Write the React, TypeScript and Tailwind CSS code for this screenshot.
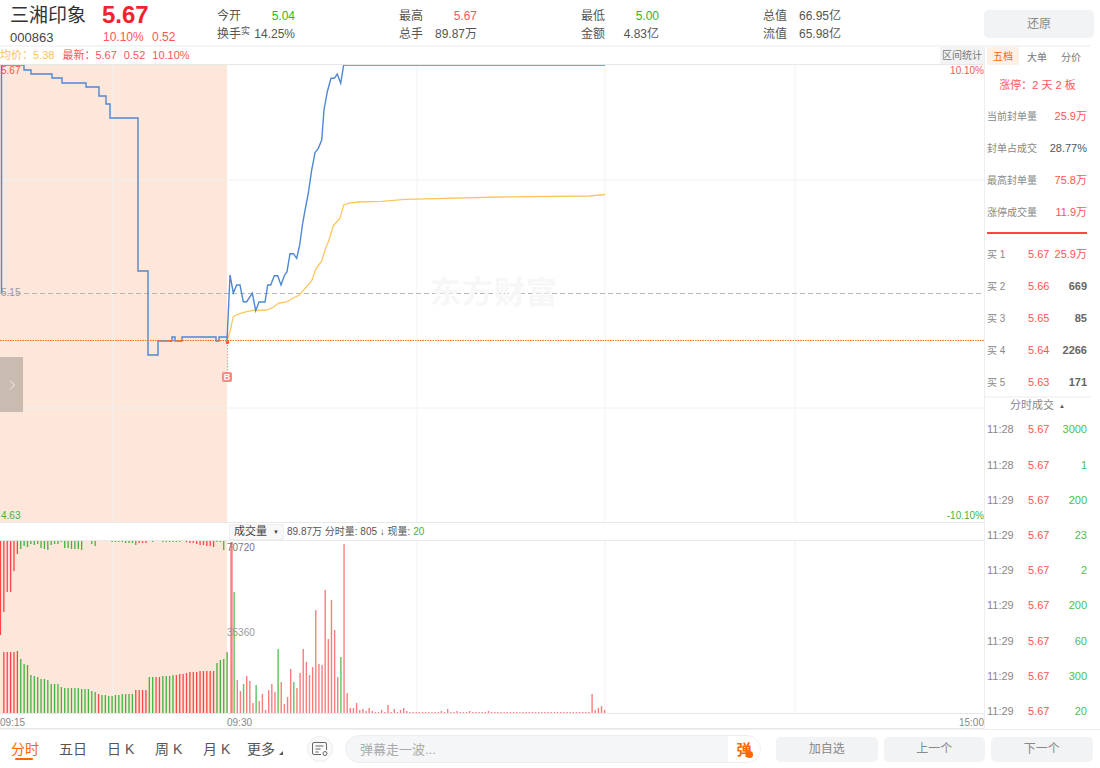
const priceLine =
  '1.5,293 1.5,65 24,65 24,70 31,70 31,74 52,74 52,78 62,78 62,83 86,83 86,87 99,87 99,96 106,96 106,104 110,104 110,118 138,118 138,271 148,271 148,355 158,355 158,341 172,341 172,337 175,337 175,341 182,341 182,337 216,337 216,341 219,341 219,337 227,337 227,341 ' +
  '230,275 233.3,293 236.7,285 240,285 243.3,301.7 246.7,301.7 252.3,293 255.7,310.7 259,302 265,302 267.7,285 270.7,285 274.3,275.7 277.7,275.7 281,285 284.3,275.7 287,271.7 290,253.7 293.3,253.7 296.7,258.3 299.7,245 302.7,223 305.7,206.7 308.3,193.3 311.7,170 315,152.7 318.3,148.3 321.7,140 324,110 327.3,91.7 331,78.3 334.3,78.3 337.3,74 340.7,83.3 343.7,65 605,65'

const avgLine =
  '227.7,339 230,331.7 233.3,316.7 238.3,314 246.7,311.7 253.3,310.3 266.7,310 273.3,307.3 278.3,303.3 286.7,302 293.3,298 299,295.3 305,288.3 311.7,280.7 315.7,269.3 321.7,261 325,250 329,240 333.3,225.7 340,218.3 343.7,205 348.3,203.3 358.3,202 381.7,201.3 405,199.3 500,197 590,196 605,194.5'

// pre-market bars: hanging from the top and rising from the bottom
const preTop = [94, 71, 51, 51, 30, 13, 8, 5, 6, 3, 4, 3, 7, 8, 9, 4, 3, 3, 1, 7, 7, 8, 8, 8, 9, 0, 0, 3, 5, 0, 0, 0, 0, 1, 1, 1, 1, 2, 2, 2, 4, 2, 2, 2, 0, 1, 0, 0, 1, 1, 1, 1, 1, 1, 0, 1, 2, 2, 3, 4, 4, 5, 5, 6, 1, 1, 9]
const preTopRed = (i: number) => i < 6 || (i >= 41 && i <= 43) || (i >= 54 && i <= 63)
const preBottom = [0, 61, 61, 61, 61, 62, 54, 49, 48, 38, 37, 36, 34, 34, 33, 29, 29, 29, 26, 25, 25, 25, 25, 25, 24, 24, 24, 22, 21, 19, 18, 18, 17, 17, 18, 18, 19, 19, 19, 19, 23, 23, 23, 23, 36, 36, 36, 36, 37, 37, 37, 38, 38, 39, 39, 40, 41, 41, 41, 42, 42, 42, 42, 42, 50, 53, 54, 61]
const preBottomRed = (i: number) => i <= 5 || i === 29 || (i >= 40 && i <= 43) || (i >= 46 && i <= 47) || (i >= 52 && i <= 63)

// after the open
const postHeights = [
  171, 121, 33, 22, 29, 37, 32, 10, 28, 12, 19, 3, 23, 29, 21, 64, 31, 9, 16, 44, 31, 25, 40, 64, 51, 38, 46, 103, 49, 48, 123, 74, 113, 83, 36, 56, 169,
  20, 5, 5, 10, 3, 4, 2, 5, 2, 1, 1, 3, 1, 8, 1, 4, 1, 3, 5, 2, 1, 1, 1, 1, 1, 1, 1, 1, 1, 1, 2, 1, 4, 1, 1, 2, 1, 1, 1, 2, 1, 1, 1, 1, 1, 2, 1, 1, 1, 1, 1, 1, 1, 1, 1, 1, 1, 1, 1, 1, 1, 1, 1, 1, 1, 1, 1, 1, 1, 1, 1, 1, 1, 1, 1, 1, 1, 1, 19, 3, 5, 7, 3,
]
const postGreen = [1, 4, 8, 15, 20, 35]

const tradeRows = [
  ['11:28', '5.67', '3000'],
  ['11:28', '5.67', '1'],
  ['11:29', '5.67', '200'],
  ['11:29', '5.67', '23'],
  ['11:29', '5.67', '2'],
  ['11:29', '5.67', '200'],
  ['11:29', '5.67', '60'],
  ['11:29', '5.67', '300'],
  ['11:29', '5.67', '20'],
]

const sealRows = [
  { label: '当前封单量', value: '25.9万', hot: true },
  { label: '封单占成交', value: '28.77%', hot: false },
  { label: '最高封单量', value: '75.8万', hot: true },
  { label: '涨停成交量', value: '11.9万', hot: true },
]

const bidRows = [
  ['买 1', '5.67', '25.9万'],
  ['买 2', '5.66', '669'],
  ['买 3', '5.65', '85'],
  ['买 4', '5.64', '2266'],
  ['买 5', '5.63', '171'],
]

const stats = [
  [['今开', '5.04', 'text-[#2fb52f]'], ['换手', '14.25%', 'text-[#555]']],
  [['最高', '5.67', 'text-[#f55]'], ['总手', '89.87万', 'text-[#555]']],
  [['最低', '5.00', 'text-[#2fb52f]'], ['金额', '4.83亿', 'text-[#555]']],
  [['总值', '66.95亿', 'text-[#555]'], ['流值', '65.98亿', 'text-[#555]']],
]

const periods = ['五日', '日 K', '周 K']

function PriceChart() {
  return (
    <svg viewBox="0 65 984 457" className="block h-[457px] w-[984px]">
      <rect x="0" y="65" width="227" height="457" fill="#fde6da" />
      {[113, 417, 605, 795].map(x => (
        <line key={x} x1={x} x2={x} y1="65" y2="522" stroke="#f2f2f2" />
      ))}
      {[180, 408].map(y => (
        <line key={y} x1="0" x2="984" y1={y} y2={y} stroke="#f0f0f0" />
      ))}
      <line x1="0" x2="984" y1="293.5" y2="293.5" stroke="#b5b5b5" strokeDasharray="5 3" />
      <polyline points={avgLine} fill="none" stroke="#fcc65e" strokeWidth="1.3" />
      <polyline points={priceLine} fill="none" stroke="#4d88d2" strokeWidth="1.4" />
      <line x1="0" x2="984" y1="340.5" y2="340.5" stroke="#fb6a1e" strokeDasharray="1.5 1" />
      <line x1="227.5" x2="227.5" y1="342" y2="372" stroke="#f88" strokeDasharray="1.5 1.5" />
      <circle cx="227.5" cy="342.5" r="1.8" fill="#f55" />
    </svg>
  )
}

function VolumeChart() {
  const base = 713
  return (
    <svg viewBox="0 541 984 172" className="block h-[172px] w-[984px]">
      <rect x="0" y="541" width="227" height="172" fill="#fde6da" />
      {[113, 417, 605, 795].map(x => (
        <line key={x} x1={x} x2={x} y1="541" y2="713" stroke="#f2f2f2" />
      ))}
      {preTop.map((h, i) => (
        <rect key={`t${i}`} x={i * 3.383 - 0.2} y={541} width="1.3" height={h} fill={preTopRed(i) ? '#f44' : '#3fb53f'} />
      ))}
      {preBottom.map((h, i) => (
        <rect key={`b${i}`} x={i * 3.383 - 0.2} y={base - h} width="1.3" height={h} fill={preBottomRed(i) ? '#f44' : '#3fb53f'} />
      ))}
      {postHeights.map((h, i) => (
        <rect
          key={`p${i}`}
          x={230.3 + i * 3.14}
          y={base - h}
          width={i === 0 ? 2.4 : 1.4}
          height={h}
          fill={postGreen.includes(i) ? '#5cc45c' : '#fa7d7d'}
        />
      ))}
    </svg>
  )
}

function ChartColumn() {
  return (
    <div className="flex w-[984px] flex-col">
      <div className="flex h-[18px] items-center justify-between border-b border-[#e8e8e8] text-[11px] leading-none">
        <div className="flex items-center whitespace-pre">
          <span className="text-[#fcc25a]">均价：5.38</span>
          <span className="ml-[8px] text-[#f55]">最新：5.67</span>
          <span className="ml-[7px] text-[#f55]">0.52</span>
          <span className="ml-[7px] text-[#f55]">10.10%</span>
        </div>
        <div className="flex h-full w-[44px] items-center justify-center whitespace-nowrap bg-[#f2f3f5] text-[10px] text-[#777]">区间统计</div>
      </div>
      <div className="relative h-[457px]">
        <PriceChart />
        <span className="absolute left-[1px] top-[0px] text-[10px] leading-[12px] text-[#f55]">5.67</span>
        <span className="absolute left-[1px] top-[222px] text-[10px] leading-[12px] text-[#999]">5.15</span>
        <span className="absolute bottom-[0px] left-[1px] text-[10px] leading-[12px] text-[#3fb53f]">4.63</span>
        <span className="absolute right-[0px] top-[0px] text-[10px] leading-[12px] text-[#f55]">10.10%</span>
        <span className="absolute bottom-[0px] right-[0px] text-[10px] leading-[12px] text-[#3fb53f]">-10.10%</span>
        <span className="absolute left-[430px] top-[210px] text-[31px] font-bold leading-[36px] tracking-[1px] text-[#f7f7f7]">东方财富</span>
        <div className="absolute left-[0px] top-[292px] flex h-[55px] w-[23px] items-center justify-center bg-[#c9bbb0]">
          <svg width="8" height="12" viewBox="0 0 8 12" fill="none" stroke="#eee" strokeWidth="1">
            <path d="M2 1.5 6.5 6 2 10.5" />
          </svg>
        </div>
        <span className="absolute left-[222px] top-[307px] flex h-[10px] w-[10px] items-center justify-center rounded-[2px] bg-[#fb8a82] text-[9px] font-bold leading-none text-white">B</span>
      </div>
      <div className="flex h-[19px] items-center border-y border-[#e8e8e8] text-[10px] leading-none text-[#555]">
        <div className="ml-[229px] flex h-[16px] w-[55px] items-center justify-between rounded-[2px] border border-[#eee] bg-[#f8f8f8] px-[4px] text-[11px] text-[#444]">
          成交量
          <span className="text-[6px]">▼</span>
        </div>
        <span className="ml-[3px] whitespace-pre">89.87万 分时量: 805 ↓ 现量: </span>
        <span className="text-[#3fb53f]">20</span>
      </div>
      <div className="relative h-[172px]">
        <VolumeChart />
        <span className="absolute left-[227px] top-[0px] text-[10px] leading-[14px] text-[#777]">70720</span>
        <span className="absolute left-[227px] top-[85px] text-[10px] leading-[14px] text-[#999]">35360</span>
      </div>
      <div className="flex h-[16px] items-center justify-between border-y border-[#e8e8e8] pt-[3px] text-[10px] leading-none text-[#888]">
        <div className="flex">
          <span className="w-[227px]">09:15</span>
          <span>09:30</span>
        </div>
        <span>15:00</span>
      </div>
    </div>
  )
}

function SidePanel() {
  return (
    <div className="flex w-[106px] flex-col border-l border-[#eee]">
      <div className="flex h-[21px] items-start whitespace-nowrap text-[10px] leading-[21px] text-[#777]">
        <span className="ml-[2px] flex h-[18px] w-[32px] shrink-0 items-center justify-center rounded-[2px] bg-[#fdf0e8] pt-[1px] text-[#f60]">五档</span>
        <span className="ml-[8px]">大单</span>
        <span className="ml-[14px]">分价</span>
      </div>
      <div className="flex h-[35px] items-center justify-center pt-[3px] text-[11px] leading-none text-[#f55]">涨停：2 天 2 板</div>
      <div className="ml-[2px] mr-[3px] flex flex-col border-b-2 border-[#f44] pb-[3px]">
        {sealRows.map(row => (
          <div key={row.label} className="flex h-[32px] items-center justify-between whitespace-nowrap text-[10px] leading-none text-[#888]">
            <span>{row.label}</span>
            <span className={row.hot ? 'text-[11px] text-[#f55]' : 'text-[11px] text-[#555]'}>{row.value}</span>
          </div>
        ))}
      </div>
      <div className="ml-[2px] mr-[3px] mt-[5px] flex flex-col">
        {bidRows.map((row, i) => (
          <div key={row[0]} className="flex h-[32px] items-center whitespace-nowrap text-[10px] leading-none text-[#888]">
            <span className="w-[41px]">{row[0]}</span>
            <span className="text-[11px] text-[#f55]">{row[1]}</span>
            {i === 0 ? (
              <span className="ml-auto text-[11px] text-[#f55]">{row[2]}</span>
            ) : (
              <span className="ml-auto text-[11px] font-bold text-[#666]">{row[2]}</span>
            )}
          </div>
        ))}
      </div>
      <div className="-mt-[3px] h-[2px] bg-[#f5f5f5]" />
      <div className="flex h-[18px] items-center justify-center gap-[5px] text-[11px] leading-none text-[#888]">
        分时成交
        <span className="text-[6px] text-[#555]">▲</span>
      </div>
      <div className="-mt-[2px] ml-[2px] mr-[3px] flex flex-col">
        {tradeRows.map((row, i) => (
          <div key={i} className="flex h-[35.2px] items-center text-[11px] leading-none">
            <span className="w-[41px] text-[#888]">{row[0]}</span>
            <span className="text-[#f55]">{row[1]}</span>
            <span className="ml-auto text-[#4cc04c]">{row[2]}</span>
          </div>
        ))}
      </div>
    </div>
  )
}

export default function App() {
  return (
    <div className="flex h-[768px] w-[1100px] flex-col overflow-hidden bg-white font-['Liberation_Sans','Noto_Sans_CJK_SC',sans-serif]">
      <div className="flex h-[45px] items-start">
        <div className="w-[217px] pl-[10px] pt-[1px]">
          <div className="flex h-[28px] items-center">
            <span className="w-[92px] text-[19px] leading-none text-[#333]">三湘印象</span>
            <span className="text-[24px] font-bold leading-none text-[#f5222d]">5.67</span>
          </div>
          <div className="flex h-[16px] items-center text-[12px] leading-none">
            <span className="w-[93px] text-[13px] text-[#444]">000863</span>
            <span className="w-[49px] text-[#f55]">10.10%</span>
            <span className="text-[#f55]">0.52</span>
          </div>
        </div>
        <div className="flex w-[767px] pt-[7px]">
          {stats.map(col => (
            <div key={col[0][0]} className="w-[182px]">
              {col.map(([label, value, color]) => (
                <div key={label} className="flex h-[18px] w-[78px] items-center justify-between whitespace-nowrap text-[12px] leading-none text-[#555]">
                  <span>
                    {label}
                    {label === '换手' && <sup className="text-[9px]">实</sup>}
                  </span>
                  <span className={color}>{value}</span>
                </div>
              ))}
            </div>
          ))}
        </div>
        <button className="mt-[10px] h-[28px] w-[110px] rounded-[5px] bg-[#f2f3f5] text-[12px] text-[#888]">还原</button>
      </div>
      <div className="mr-[10px] h-[2px] bg-[#f5f5f5]" />
      <div className="flex h-[682px]">
        <ChartColumn />
        <SidePanel />
      </div>
      <div className="flex h-[39px] w-[1100px] items-center border-t border-[#eee] whitespace-nowrap">
        <div className="relative ml-[11px] flex h-[24px] w-[48px] items-center text-[14px] leading-none text-[#f60]">
          分时
          <span className="absolute left-[4px] top-[21px] h-[2px] w-[18px] rounded-full bg-[#f60]" />
        </div>
        {periods.map(p => (
          <span key={p} className="w-[48px] text-[14px] leading-none text-[#555]">{p}</span>
        ))}
        <span className="w-[44px] text-[14px] leading-none text-[#555]">月 K</span>
        <span className="flex w-[60px] items-end text-[14px] leading-none text-[#555]">
          更多
          <span className="mb-[1px] ml-[4px] h-0 w-0 border-b-[4px] border-l-[4px] border-b-[#555] border-l-transparent" />
        </span>
        <div className="flex h-[26px] w-[26px] shrink-0 items-center justify-center rounded-full border border-[#eee] bg-[#fafafa]">
          <svg width="18" height="16" viewBox="0 0 18 16" fill="none" stroke="#666" strokeWidth="1">
            <path d="M10 13.5H3a1.5 1.5 0 0 1-1.5-1.5V3A1.5 1.5 0 0 1 3 1.5h11A1.5 1.5 0 0 1 15.5 3v6" />
            <path d="M4.5 5h8M4.5 8h5M4.5 11h3" />
            <circle cx="14" cy="12.5" r="2" />
          </svg>
        </div>
        <div className="ml-[12px] flex h-[28px] w-[416px] shrink-0 items-center overflow-hidden rounded-full border border-[#eee] bg-[#f5f6f8]">
          <span className="ml-[14px] flex-1 text-[13px] leading-none text-[#aaa]">弹幕走一波...</span>
          <div className="relative flex h-full w-[32px] items-center justify-center bg-white text-[15px] font-bold leading-none text-[#f60]">
            弹
            <span className="absolute left-[18px] top-[15px] h-[7px] w-[7px] rounded-full bg-[#f60]" />
          </div>
        </div>
        <div className="ml-[15px] flex gap-[6px]">
          {['加自选', '上一个', '下一个'].map(label => (
            <button key={label} className="h-[25px] w-[101.5px] rounded-[5px] bg-[#f2f3f5] text-[12px] leading-none text-[#888]">{label}</button>
          ))}
        </div>
      </div>
    </div>
  )
}
